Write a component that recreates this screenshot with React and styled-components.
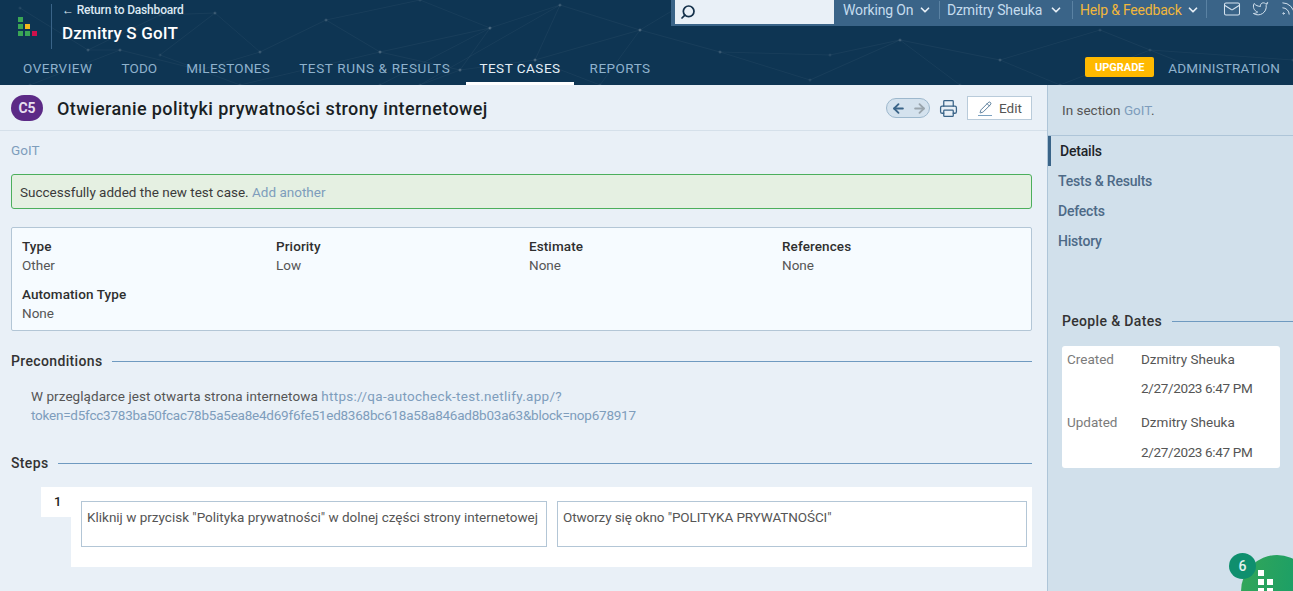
import React from 'react';
import styled, { createGlobalStyle } from 'styled-components';
import { ArrowLeft, ArrowRight, ChevronDown, Mail, Pencil, Printer, Rss, Search, Twitter } from 'lucide-react';

const tabs = [
  { name: 'OVERVIEW', spacing: 0.5 },
  { name: 'TODO', spacing: 0.1 },
  { name: 'MILESTONES', spacing: 0.3 },
  { name: 'TEST RUNS & RESULTS', spacing: 0.65 },
  { name: 'TEST CASES', spacing: 0.5 },
  { name: 'REPORTS', spacing: 0.5 },
];
const sideLinks = ['Details', 'Tests & Results', 'Defects', 'History'];

const fields = [
  { label: 'Type', value: 'Other' },
  { label: 'Priority', value: 'Low' },
  { label: 'Estimate', value: 'None' },
  { label: 'References', value: 'None' },
  { label: 'Automation Type', value: 'None' },
];

const netLines = [
  [[20, 8], [88, 50], [160, 15], [215, 13], [260, 52], [200, 70], [120, 50], [88, 50]],
  [[215, 13], [160, 55], [240, 85], [380, 52], [326, 20], [260, 52]],
  [[326, 20], [420, 0], [490, 28], [560, 5], [640, 30], [690, 0]],
  [[380, 52], [490, 28], [460, 70], [380, 52]],
  [[460, 70], [420, 85], [560, 5], [535, 60], [460, 70]],
  [[535, 60], [640, 30], [600, 85], [535, 60]],
  [[640, 30], [720, 52], [810, 80], [900, 40], [960, 85]],
  [[720, 52], [830, 55], [900, 40], [1000, 60], [1100, 30], [1200, 70]],
  [[1000, 60], [1060, 85], [1150, 50], [1293, 60]],
  [[490, 28], [380, 85]],
  [[120, 50], [30, 85]],
];

const Logo = () => (
  <svg width="19" height="19" viewBox="0 0 19 19">
    <rect x="0" y="0" width="5" height="5" fill="#3aa655" />
    <rect x="0" y="7" width="5" height="5" fill="#3aa655" />
    <rect x="0" y="14" width="5" height="5" fill="#3aa655" />
    <rect x="7" y="7" width="5" height="5" fill="#f5b81c" />
    <rect x="7" y="14" width="5" height="5" fill="#3aa655" />
    <rect x="14" y="14" width="5" height="5" fill="#d0104c" />
  </svg>
);

const HeaderNet = () => (
  <NetDrawing width="1293" height="85" viewBox="0 0 1293 85">
    {netLines.map((line, i) => (
      <g key={i}>
        <polyline points={line.map((p) => p.join(',')).join(' ')} fill="none" stroke="#fff" strokeOpacity="0.045" />
        {line.map((p, j) => (
          <circle key={j} cx={p[0]} cy={p[1]} r="1.5" fill="#fff" fillOpacity="0.08" />
        ))}
      </g>
    ))}
  </NetDrawing>
);

const App = () => (
  <Page>
    <GlobalStyle />
    <Header>
      <HeaderNet />
      <HeaderTop>
        <Brand>
          <LogoCell>
            <Logo />
          </LogoCell>
          <BrandText>
            <BackLink>← Return to Dashboard</BackLink>
            <ProjectName>Dzmitry S GoIT</ProjectName>
          </BrandText>
        </Brand>
        <TopBar>
          <SearchBox>
            <SearchIcon size={16} strokeWidth={2.6} />
          </SearchBox>
          <TopItem $width={105} $gap={5}>
            Working On <ChevronDown size={14} strokeWidth={3} />
          </TopItem>
          <TopItem $width={133} $gap={7} $line>
            Dzmitry Sheuka <ChevronDown size={14} strokeWidth={3} />
          </TopItem>
          <TopItem $width={134} $gap={4} $line $help>
            Help &amp; Feedback <ChevronDown size={14} strokeWidth={3} />
          </TopItem>
          <SocialIcons>
            <Mail size={18} strokeWidth={1.4} />
            <Twitter size={17} strokeWidth={1.4} />
            <Rss size={17} strokeWidth={1.4} />
          </SocialIcons>
        </TopBar>
      </HeaderTop>
      <TabRow>
        <Tabs>
          {tabs.map((tab) => (
            <Tab key={tab.name} $active={tab.name === 'TEST CASES'} $spacing={tab.spacing}>
              {tab.name}
            </Tab>
          ))}
        </Tabs>
        <AdminBox>
          <Upgrade>UPGRADE</Upgrade>
          <AdminLink>ADMINISTRATION</AdminLink>
        </AdminBox>
      </TabRow>
    </Header>
    <Body>
      <Main>
        <TitleRow>
          <CaseBadge>C5</CaseBadge>
          <Title>Otwieranie polityki prywatności strony internetowej</Title>
          <Pager>
            <ArrowLeft size={15} strokeWidth={3} color="#3a6488" />
            <ArrowRight size={15} strokeWidth={3} color="#9aa5ad" />
          </Pager>
          <PrintIcon size={19} strokeWidth={1.6} />
          <EditButton>
            <EditGlyph>
              <Pencil size={13} strokeWidth={1.5} />
            </EditGlyph>
            Edit
          </EditButton>
        </TitleRow>
        <Content>
          <Crumb>GoIT</Crumb>
          <Message>
            Successfully added the new test case. <MessageLink>Add another</MessageLink>
          </Message>
          <InfoBox>
            {fields.map((f) => (
              <Field key={f.label}>
                <FieldLabel>{f.label}</FieldLabel>
                <FieldValue>{f.value}</FieldValue>
              </Field>
            ))}
          </InfoBox>
          <SectionHead>
            <SectionName>Preconditions</SectionName>
          </SectionHead>
          <Preconditions>
            W przeglądarce jest otwarta strona internetowa{' '}
            <TextLink $spacing={0.3}>https://qa-autocheck-test.netlify.app/?</TextLink>
            <br />
            <TextLink $spacing={-0.23}>
              token=d5fcc3783ba50fcac78b5a5ea8e4d69f6fe51ed8368bc618a58a846ad8b03a63&amp;block=nop678917
            </TextLink>
          </Preconditions>
          <StepsHead>
            <SectionName>Steps</SectionName>
          </StepsHead>
          <StepRow>
            <StepNumber>1</StepNumber>
            <StepBody>
              <StepCell>Kliknij w przycisk "Polityka prywatności" w dolnej części strony internetowej</StepCell>
              <StepCell $spacing={-0.1}>Otworzy się okno "POLITYKA PRYWATNOŚCI"</StepCell>
            </StepBody>
          </StepRow>
        </Content>
      </Main>
      <Side>
        <SideTop>
          In section <MessageLink>GoIT</MessageLink>.
        </SideTop>
        <SideNav>
          {sideLinks.map((link) => (
            <SideLink key={link} $active={link === 'Details'}>
              {link}
            </SideLink>
          ))}
        </SideNav>
        <PeopleHead>
          <SectionName>People &amp; Dates</SectionName>
        </PeopleHead>
        <PeopleCard>
          <PeopleLabel>Created</PeopleLabel>
          <PeopleValue>Dzmitry Sheuka</PeopleValue>
          <span />
          <PeopleValue $date>2/27/2023 6:47 PM</PeopleValue>
          <PeopleLabel>Updated</PeopleLabel>
          <PeopleValue>Dzmitry Sheuka</PeopleValue>
          <span />
          <PeopleValue $date>2/27/2023 6:47 PM</PeopleValue>
        </PeopleCard>
      </Side>
    </Body>
    <Bubble>
      <svg width="24" height="24" viewBox="0 0 24 24">
        <rect x="8" y="0" width="6" height="6" fill="#fff" />
        <rect x="8" y="9" width="6" height="6" fill="#fff" />
        <rect x="17" y="9" width="6" height="6" fill="#fff" />
        <rect x="8" y="18" width="6" height="6" fill="#fff" />
        <rect x="17" y="18" width="6" height="6" fill="#fff" />
      </svg>
    </Bubble>
    <BubbleCount>6</BubbleCount>
  </Page>
);

const GlobalStyle = createGlobalStyle`
  html, body {
    margin: 0;
    padding: 0;
    height: 100%;
    overflow: hidden;
    font-family: Roboto, 'Liberation Sans', sans-serif;
    font-size: 13.5px;
    color: #333;
  }
  * {
    box-sizing: border-box;
  }
`;

const Page = styled.div`
  position: relative;
  width: 1293px;
  height: 591px;
  overflow: hidden;
  background: #e9f0f7;
`;

const Header = styled.header`
  position: relative;
  height: 85px;
  background: #0e3553;
`;

const NetDrawing = styled.svg`
  position: absolute;
  left: 0;
  top: 0;
`;

const HeaderTop = styled.div`
  position: relative;
  display: flex;
  justify-content: space-between;
  height: 52px;
`;

const Brand = styled.div`
  display: flex;
  padding: 4px 0 0 18px;
`;

const LogoCell = styled.div`
  width: 34px;
  height: 45px;
  padding-top: 13px;
  border-right: 1px solid #3a6488;
`;

const BrandText = styled.div`
  padding-left: 10px;
`;

const BackLink = styled.div`
  font-size: 12px;
  font-weight: 500;
  line-height: 12px;
  letter-spacing: -0.17px;
  color: #dce8f2;
`;

const ProjectName = styled.div`
  margin-top: 6px;
  font-size: 17px;
  font-weight: 500;
  line-height: 22px;
  letter-spacing: 0.15px;
  color: #fff;
`;

const TopBar = styled.div`
  display: flex;
  align-items: flex-start;
  width: 622px;
  height: 26px;
  padding-left: 4px;
  overflow: hidden;
  background: #3a6488;
  color: #c5dcee;
  font-size: 14px;
`;

const SearchBox = styled.div`
  display: flex;
  flex-shrink: 0;
  align-items: center;
  width: 159px;
  height: 24px;
  padding-left: 5px;
  background: #e9f0f7;
`;

const SearchIcon = styled(Search)`
  color: #14304a;
  transform: scaleX(-1);
`;

const TopItem = styled.div`
  display: flex;
  flex-shrink: 0;
  align-items: center;
  gap: ${(p) => p.$gap}px;
  width: ${(p) => p.$width}px;
  height: 18px;
  margin-top: 1px;
  padding-left: ${(p) => (p.$line ? 7 : 9)}px;
  white-space: nowrap;
  letter-spacing: ${(p) => (p.$help ? -0.2 : -0.15)}px;
  border-left: ${(p) => (p.$line ? '1px solid #5a82a3' : 'none')};
  color: ${(p) => (p.$help ? '#f1b73b' : '#c5dcee')};
  svg {
    flex-shrink: 0;
    color: #e6eef5;
  }
`;

const SocialIcons = styled.div`
  display: flex;
  flex-shrink: 0;
  gap: 11px;
  height: 18px;
  padding-left: 16px;
  border-left: 1px solid #5a82a3;
  color: #d5e3ef;
`;

const TabRow = styled.div`
  position: relative;
  display: flex;
  justify-content: space-between;
  height: 33px;
`;

const Tabs = styled.nav`
  display: flex;
  gap: 3px;
  padding-left: 10px;
`;

const Tab = styled.div`
  padding: 7px 13px 0;
  font-size: 13.5px;
  line-height: 18px;
  letter-spacing: ${(p) => p.$spacing}px;
  white-space: nowrap;
  color: ${(p) => (p.$active ? '#e4eef6' : '#8fb2cd')};
  border-bottom: 3px solid ${(p) => (p.$active ? '#fff' : 'transparent')};
`;

const AdminBox = styled.div`
  display: flex;
  align-items: flex-start;
  gap: 14px;
  padding: 5px 13px 0 0;
`;

const Upgrade = styled.div`
  width: 69px;
  height: 20px;
  border-radius: 2px;
  background: #ffb900;
  color: #fff;
  font-size: 11px;
  font-weight: 700;
  line-height: 22px;
  text-align: center;
`;

const AdminLink = styled.div`
  padding-top: 2px;
  font-size: 13.5px;
  line-height: 18px;
  letter-spacing: 0.17px;
  color: #8fb2cd;
`;

const Body = styled.div`
  display: flex;
  height: 506px;
`;

const Main = styled.main`
  width: 1047px;
`;

const TitleRow = styled.div`
  display: flex;
  align-items: center;
  height: 46px;
  padding: 1px 15px 0 11px;
  border-bottom: 1px solid #d5e0ea;
`;

const CaseBadge = styled.div`
  width: 32px;
  height: 26px;
  border-radius: 13px;
  background: #5c2a86;
  color: #e7dff0;
  font-size: 14px;
  font-weight: 700;
  line-height: 26px;
  text-align: center;
`;

const Title = styled.h1`
  flex: 1;
  margin: 0 0 0 14px;
  font-size: 18px;
  font-weight: 500;
  letter-spacing: 0.4px;
  color: #1a1f24;
`;

const Pager = styled.div`
  display: flex;
  align-items: center;
  justify-content: space-between;
  width: 44px;
  height: 20px;
  padding: 0 2px 0 4px;
  border: 1px solid #9db8cd;
  border-radius: 10px;
  background: #d4e2ee;
`;

const PrintIcon = styled(Printer)`
  margin: 0 9px 0 9px;
  color: #3a6488;
`;

const EditButton = styled.div`
  display: flex;
  align-items: center;
  width: 65px;
  height: 24px;
  padding-left: 10px;
  border: 1px solid #b9cbda;
  background: #fff;
  font-size: 13.5px;
  color: #555;
`;

const EditGlyph = styled.span`
  display: flex;
  justify-content: center;
  width: 14px;
  margin-right: 7px;
  padding-bottom: 1px;
  border-bottom: 1.5px solid #7ba1c0;
  color: #3a6488;
`;

const Content = styled.div`
  padding: 0 15px 0 11px;
`;

const Crumb = styled.div`
  padding-top: 11px;
  height: 43px;
  line-height: 17px;
  color: #7e9dbc;
`;

const Message = styled.div`
  height: 35px;
  padding: 1px 0 0 8px;
  border: 1px solid #4caf5c;
  border-radius: 3px;
  background: #e5f0e2;
  line-height: 33px;
  color: #3b3b3b;
`;

const MessageLink = styled.span`
  color: #7e9dbc;
`;

const InfoBox = styled.div`
  display: grid;
  grid-template-columns: 254px repeat(3, 253px);
  grid-auto-rows: 48px;
  height: 104px;
  margin-top: 18px;
  padding: 9px 10px 0;
  border: 1px solid #b3c6d6;
  border-radius: 2px;
  background: #f6fbff;
`;

const Field = styled.div`
  line-height: 19px;
`;

const FieldLabel = styled.div`
  font-weight: 500;
  letter-spacing: 0.1px;
  color: #2f2f2f;
`;

const FieldValue = styled.div`
  color: #555;
`;

const SectionHead = styled.div`
  display: flex;
  align-items: center;
  gap: 10px;
  margin-top: 20px;
  height: 20px;
  &::after {
    content: '';
    flex: 1;
    height: 1px;
    background: #6f9ac0;
  }
`;

const StepsHead = styled(SectionHead)`
  margin-top: 28px;
`;

const SectionName = styled.span`
  font-size: 14px;
  font-weight: 500;
  letter-spacing: 0.35px;
  color: #333;
`;

const Preconditions = styled.div`
  margin-top: 16px;
  padding-left: 20px;
  line-height: 19px;
  letter-spacing: 0.065px;
  color: #555;
`;

const TextLink = styled.span`
  letter-spacing: ${(p) => p.$spacing}px;
  color: #7e9dbc;
`;

const StepRow = styled.div`
  display: flex;
  align-items: flex-start;
  margin-top: 14px;
  margin-left: 30px;
`;

const StepNumber = styled.div`
  width: 30px;
  height: 30px;
  padding-top: 6px;
  padding-left: 13px;
  background: #fff;
  font-weight: 500;
  font-size: 13px;
  line-height: 17px;
  color: #222;
`;

const StepBody = styled.div`
  flex: 1;
  display: grid;
  grid-template-columns: 466px 470px;
  gap: 10px;
  height: 80px;
  padding: 14px 5px 0 10px;
  background: #fff;
`;

const StepCell = styled.div`
  height: 46px;
  padding: 6px 5px;
  border: 1px solid #b3c6d6;
  line-height: 19px;
  letter-spacing: ${(p) => p.$spacing || 0}px;
  white-space: nowrap;
  overflow: hidden;
  color: #555;
`;

const Side = styled.aside`
  flex: 1;
  border-left: 1px solid #aec5d8;
  background: #d1e0eb;
`;

const SideTop = styled.div`
  height: 51px;
  padding: 17px 0 0 14px;
  line-height: 17px;
  border-bottom: 1px solid #aec5d8;
  color: #555;
`;

const SideNav = styled.nav`
  display: flex;
  flex-direction: column;
`;

const SideLink = styled.div`
  height: 30px;
  padding-left: ${(p) => (p.$active ? '9px' : '7px')};
  font-size: 14px;
  font-weight: 500;
  line-height: 30px;
  letter-spacing: -0.2px;
  color: ${(p) => (p.$active ? '#1e2429' : '#4d6a87')};
  border-left: 3px solid ${(p) => (p.$active ? '#3a6488' : 'transparent')};
`;

const PeopleHead = styled(SectionHead)`
  margin: 55px 0 0 14px;
`;

const PeopleCard = styled.div`
  display: grid;
  grid-template-columns: 74px 1fr;
  grid-template-rows: 26px 32px 36px 24px;
  align-items: center;
  width: 218px;
  height: 122px;
  margin: 15px 0 0 14px;
  padding-left: 5px;
  border-radius: 3px;
  background: #fff;
`;

const PeopleLabel = styled.div`
  color: #7b7b7b;
`;

const PeopleValue = styled.div`
  white-space: nowrap;
  letter-spacing: ${(p) => (p.$date ? -0.35 : 0)}px;
  color: #555;
`;

const Bubble = styled.div`
  position: absolute;
  left: 1241px;
  top: 555px;
  width: 72px;
  height: 72px;
  padding: 15px 0 0 9px;
  border-radius: 50%;
  background: linear-gradient(100deg, #34a658, #129c6c);
`;

const BubbleCount = styled.div`
  position: absolute;
  left: 1229px;
  top: 553px;
  width: 27px;
  height: 26px;
  border-radius: 50%;
  background: #0f8f6e;
  color: #e6f3ee;
  font-size: 14px;
  font-weight: 500;
  line-height: 26px;
  text-align: center;
`;

export default App;
